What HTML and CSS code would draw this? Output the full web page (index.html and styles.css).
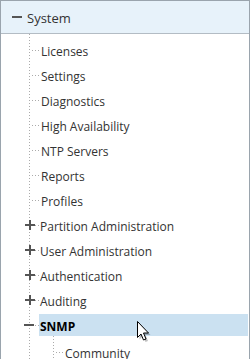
FILE: index.html
```html
<!DOCTYPE html>
<html lang="en">
<head>
    <meta charset="UTF-8">
    <title>Navigation Tree</title>
    <link rel="stylesheet" href="styles.css">
</head>
<body>
    <div class="nav-panel">
        <div class="nav-header">
            <span class="toggle toggle--minus"></span>
            <span class="nav-header-title">System</span>
        </div>
        <ul class="tree">
            <li class="tree-item"><span class="tree-label">Licenses</span></li>
            <li class="tree-item"><span class="tree-label">Settings</span></li>
            <li class="tree-item"><span class="tree-label">Diagnostics</span></li>
            <li class="tree-item"><span class="tree-label">High Availability</span></li>
            <li class="tree-item"><span class="tree-label">NTP Servers</span></li>
            <li class="tree-item"><span class="tree-label">Reports</span></li>
            <li class="tree-item"><span class="tree-label">Profiles</span></li>
            <li class="tree-item tree-item--folder"><span class="toggle toggle--plus"></span><span class="tree-label">Partition Administration</span></li>
            <li class="tree-item tree-item--folder"><span class="toggle toggle--plus"></span><span class="tree-label">User Administration</span></li>
            <li class="tree-item tree-item--folder"><span class="toggle toggle--plus"></span><span class="tree-label">Authentication</span></li>
            <li class="tree-item tree-item--folder"><span class="toggle toggle--plus"></span><span class="tree-label">Auditing</span></li>
            <li class="tree-item tree-item--folder tree-item--open">
                <div class="tree-row is-selected">
                    <span class="toggle toggle--minus"></span><span class="tree-label">SNMP</span>
                    <!-- mouse pointer over the selected row -->
                    <svg class="cursor" xmlns="http://www.w3.org/2000/svg" width="14" height="22" viewBox="0 0 14 22">
                        <path d="M2.5 2.5 L2.5 18.5 L6 15 L8.5 21 L11 20 L8.5 14 L13.5 14 Z" fill="rgba(0,0,0,0.25)"/>
                        <path d="M0.5 0.5 L0.5 16.5 L4 13 L6.5 19 L9 18 L6.5 12 L11.5 12 Z" fill="#fff" stroke="#000" stroke-width="1" stroke-linejoin="miter"/>
                    </svg>
                </div>
                <ul class="tree tree--sub">
                    <li class="tree-item"><span class="tree-label">Community</span></li>
                </ul>
            </li>
        </ul>
    </div>
</body>
</html>
```

FILE: styles.css
```css
:root {
    --border-color: #9aa4ad;
    --header-bg: #e7f2fa;
    --header-border: #b3bcc4;
    --selected-bg: #cbe1f1;
    --text-primary: #333;
    --toggle-color: #555;
    --dots: #ababab;
}

* {
    box-sizing: border-box;
    margin: 0;
    padding: 0;
}

body {
    font-family: 'Open Sans', 'Noto Sans', sans-serif;
    font-size: 12px;
    color: var(--text-primary);
    background: #fff;
    overflow: hidden;
}

.nav-panel {
    width: 250px;
    height: 359px;
    border: 1px solid var(--border-color);
    border-bottom: none;
    overflow: hidden;
}

.nav-header {
    height: 33px;
    background: var(--header-bg);
    border-bottom: 1px solid var(--header-border);
    display: flex;
    align-items: center;
    padding: 2px 0 0 11px;
    gap: 5px;
    font-size: 13px;
}

.nav-header .toggle {
    width: 10px;
    margin-top: -2px;
}

.tree {
    list-style: none;
    margin-left: 28px;
    padding-top: 2px;
    background-image: linear-gradient(var(--dots) 1px, transparent 1px);
    background-size: 1px 3px;
    background-repeat: repeat-y;
}

.tree--sub {
    margin-left: 24px;
    padding-top: 2px;
}

.tree-item {
    position: relative;
    margin-top: 3px;
    line-height: 22px;
}

.tree-label {
    padding-top: 3px;
}

.tree-item > .tree-label,
.tree-row {
    display: flex;
    align-items: center;
    height: 22px;
    padding-left: 12px;
}

/* horizontal connector from the dotted trunk */
.tree-item::before {
    content: '';
    position: absolute;
    left: 3px;
    top: 11px;
    width: 7px;
    height: 1px;
    background-image: linear-gradient(90deg, var(--dots) 1px, transparent 1px);
    background-size: 3px 1px;
}

.tree-item--folder {
    display: flex;
    align-items: center;
    height: 22px;
}

.tree-item--open {
    display: block;
    height: auto;
}

.tree-item--folder > .tree-label {
    padding-left: 5px;
}

.tree-item--folder .toggle {
    margin-left: -4px;
}

.tree-row {
    position: relative;
    padding-left: 0;
    margin-left: 10px;
    margin-right: 1px;
}

.tree-row .toggle {
    margin-left: -15px;
    margin-right: 5px;
}

.tree-row .tree-label {
    padding-left: 1px;
}

.is-selected {
    background: var(--selected-bg);
    font-weight: 700;
    color: #000;
}

.toggle {
    position: relative;
    display: inline-block;
    width: 10px;
    height: 10px;
    flex-shrink: 0;
    z-index: 1;
}

.toggle::before,
.toggle::after {
    content: '';
    position: absolute;
    background: var(--toggle-color);
}

.toggle::before {
    left: 0;
    right: 0;
    top: 4px;
    height: 2px;
}

.toggle--plus::after {
    top: 0;
    bottom: 0;
    left: 4px;
    width: 2px;
}

.cursor {
    position: absolute;
    left: 98px;
    top: 7px;
}
```
